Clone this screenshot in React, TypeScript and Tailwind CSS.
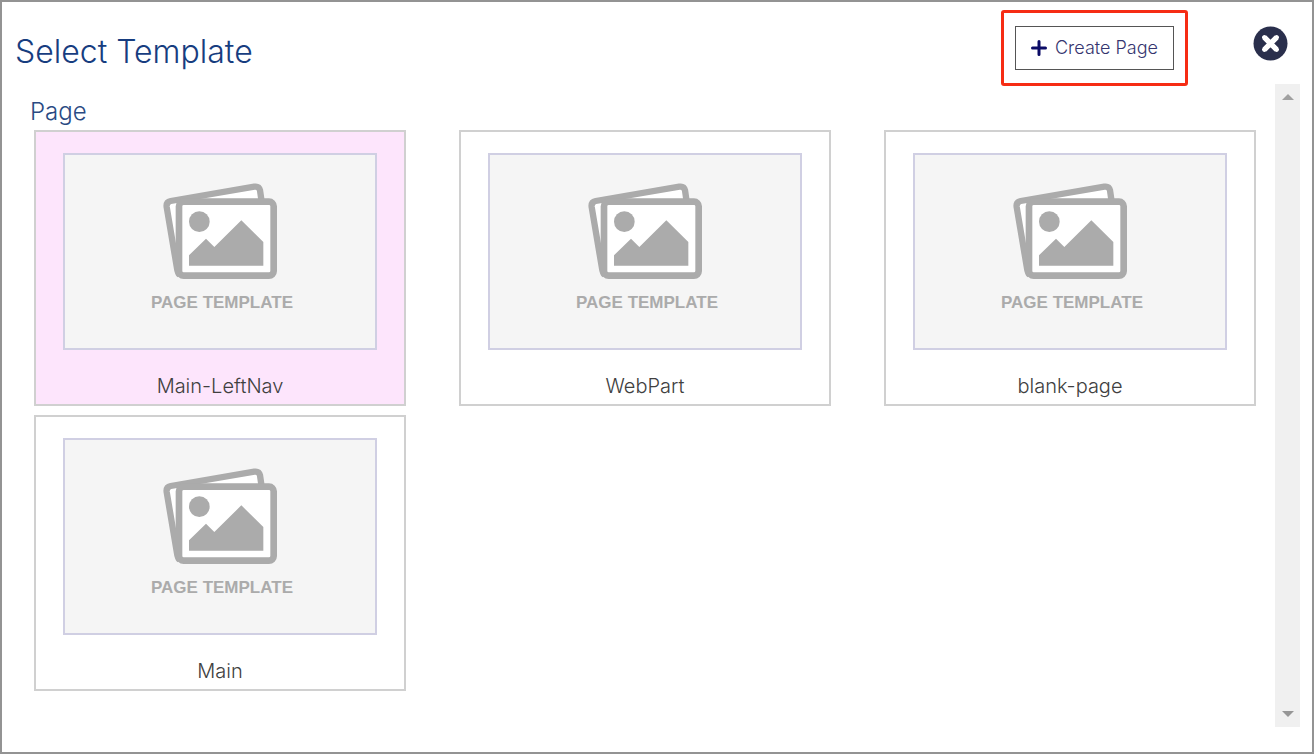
import React, { useState } from "react";

const templates = ["Main-LeftNav", "WebPart", "blank-page", "Main"];

function PictureIcon() {
  return (
    <svg viewBox="70 40 342 288" className="h-24 w-[114px]" aria-hidden="true">
      <path
        d="M120 316 Q114 310 112 296 L81 112 Q79 97 93 94 L344 51 Q358 49 361 62 L366 96"
        fill="#fff"
        stroke="#ababab"
        strokeWidth="19"
        strokeLinejoin="round"
      />
      <rect x="118" y="96" width="284" height="222" rx="14" fill="#fff" stroke="#ababab" strokeWidth="20" />
      <circle cx="179" cy="156" r="31" fill="#ababab" />
      <path d="M148 288 V257 L199 207 L224 232 L305 152 L371 217 V288 Z" fill="#ababab" />
    </svg>
  );
}

function TemplateCard({
  name,
  selected,
  onSelect,
}: {
  name: string;
  selected: boolean;
  onSelect: () => void;
}) {
  return (
    <button
      type="button"
      aria-pressed={selected}
      onClick={onSelect}
      className={`flex cursor-pointer flex-col border-2 border-[#d0d0d0] px-[27px] pt-[21px] pb-1 ${
        selected ? "bg-[#fde5fc]" : "bg-white"
      }`}
    >
      <span className="flex h-[197px] w-full flex-col items-center border-2 border-[#d0cfe3] bg-[#f5f5f5] pt-7">
        <PictureIcon />
        <span className="mt-3 pl-1 font-['Liberation_Sans',sans-serif] text-[17px] leading-6 font-bold text-[#ababab]">
          PAGE TEMPLATE
        </span>
      </span>
      <span className="mt-[22px] w-full text-center text-xl leading-7 text-[#404040]">{name}</span>
    </button>
  );
}

export default function App() {
  const [selected, setSelected] = useState("Main-LeftNav");
  return (
    <main className="flex min-h-screen flex-col border-2 border-[#939393] bg-white pr-3 pb-[25px] font-['Inter',sans-serif] font-light">
      <header className="flex items-start pt-2 pr-3 pl-[13px]">
        <h1 className="mt-5 flex-1 text-[32px] leading-11 text-[#173d7f]">Select Template</h1>
        <div className="rounded-[3px] border-3 border-[#f62c14] px-[11px] py-[13px]">
          <button
            type="button"
            className="flex h-[44px] w-[159px] cursor-pointer items-center justify-center gap-2 border border-[#555555] text-lg text-[#35356f]"
          >
            <svg viewBox="0 0 16 16" className="size-4" aria-hidden="true">
              <path d="M8 1.5V14.5M1.5 8H14.5" stroke="#0b0b66" strokeWidth="3" strokeLinecap="round" />
            </svg>
            Create Page
          </button>
        </div>
        <button type="button" aria-label="Close" className="mt-4 ml-[65px] size-[35px] cursor-pointer">
          <svg viewBox="0 0 35 35" className="size-full" aria-hidden="true">
            <circle cx="17.5" cy="17.5" r="17" fill="#2a2f4c" />
            <path
              d="M11.4 11.4L23.6 23.6M23.6 11.4L11.4 23.6"
              stroke="#fff"
              strokeWidth="5.4"
            />
            <path
              d="M11.4 11.4L23.6 23.6M23.6 11.4L11.4 23.6"
              stroke="#fff"
              strokeWidth="4.6"
              strokeLinecap="round"
            />
          </svg>
        </button>
      </header>
      <div className="-mt-[2px] flex flex-1">
        <section className="flex-1 pt-3 pr-[19px] pl-8">
          <h2 className="-ml-1 text-2xl leading-8 text-[#2a4a83]">Page</h2>
          <div className="mt-[2px] grid grid-cols-3 gap-x-[53px] gap-y-[9px]">
            {templates.map((name) => (
              <TemplateCard
                key={name}
                name={name}
                selected={name === selected}
                onSelect={() => setSelected(name)}
              />
            ))}
          </div>
        </section>
        <div className="flex w-[25px] flex-col items-center justify-between bg-[#f0f0f0] py-[10px]">
          <svg viewBox="0 0 12 6" className="h-[6px] w-3" aria-hidden="true">
            <path d="M0 6L6 0L12 6Z" fill="#a0a0a0" />
          </svg>
          <svg viewBox="0 0 12 6" className="h-[6px] w-3" aria-hidden="true">
            <path d="M0 0L6 6L12 0Z" fill="#969696" />
          </svg>
        </div>
      </div>
    </main>
  );
}
